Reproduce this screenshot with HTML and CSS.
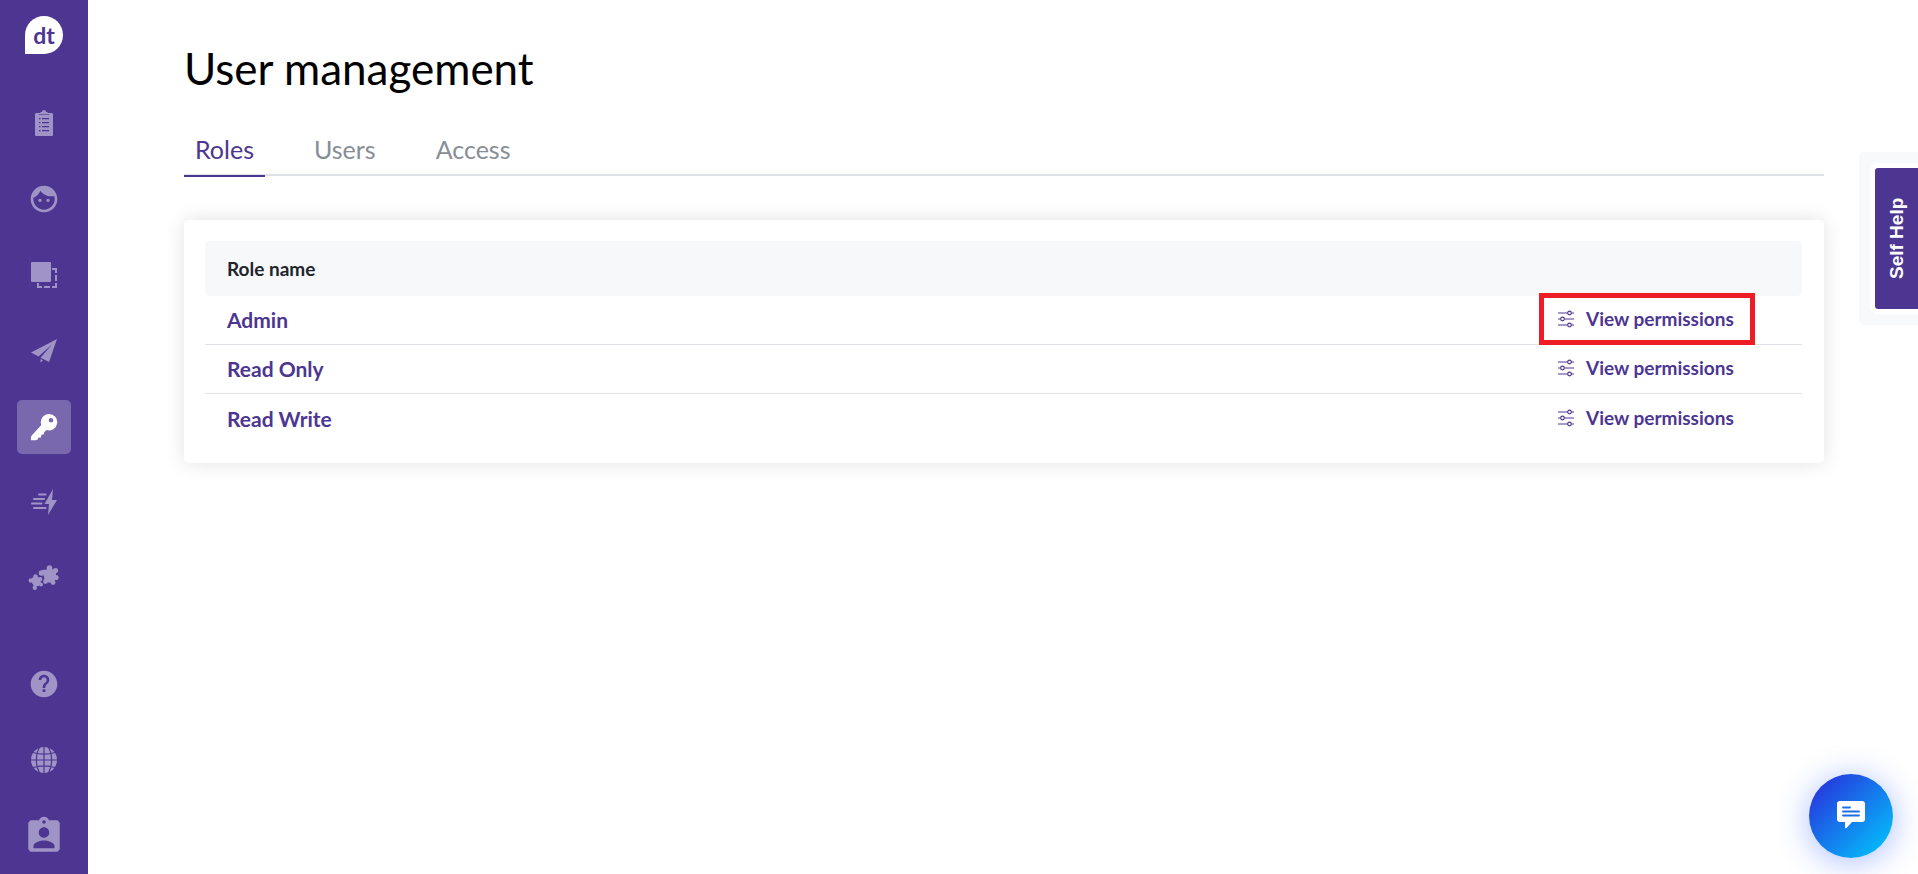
FILE: index.html
```html
<!DOCTYPE html>
<html lang="en">
<head>
<meta charset="UTF-8">
<meta name="viewport" content="width=device-width, initial-scale=1.0">
<title>User management</title>
<link rel="stylesheet" href="styles.css">
</head>
<body>
  <aside class="sidebar">
    <a href="#" class="logo" aria-label="Home"><span>dt</span></a>

    <nav class="side-nav">
      <a href="#" class="side-link" aria-label="Surveys">
        <svg width="26" height="26" viewBox="0 0 26 26" fill="currentColor">
          <path fill-rule="evenodd" d="M5.500 3H9c.3-.8 1-1 2-1 0-1.300.8-2 2-2s2 .7 2 2c1 0 1.700.2 2 1h3.500c1 0 1.500.5 1.500 1.500v20c0 1-.5 1.500-1.500 1.500h-15C4.500 26 4 25.500 4 24.500v-20C4 3.500 4.500 3 5.500 3zM8 8v1.300h1.500V8zm3 0v1.300h7V8zm-3 4v1.300h1.500V12zm3 0v1.300h7V12zm-3 4v1.300h1.500V16zm3 0v1.300h7V16zm-3 4v1.300h1.500V20zm3 0v1.300h7V20z"/>
          <path d="M8 4.500h10" stroke="#4c3692" stroke-width=".6"/>
        </svg>
      </a>
      <a href="#" class="side-link" aria-label="Contacts">
        <svg width="32" height="32" viewBox="0 0 24 24" fill="currentColor">
          <path d="M9 11.750c-.69 0-1.250.56-1.250 1.250s.56 1.250 1.250 1.250 1.250-.56 1.250-1.250-.56-1.250-1.250-1.250zm6 0c-.69 0-1.250.56-1.250 1.250s.56 1.250 1.250 1.250 1.250-.56 1.250-1.250-.56-1.250-1.250-1.250zM12 2C6.480 2 2 6.480 2 12s4.480 10 10 10 10-4.480 10-10S17.520 2 12 2zm0 18c-4.410 0-8-3.590-8-8 0-.29.02-.58.05-.86 2.360-1.050 4.230-2.980 5.210-5.370C11.070 8.330 14.050 10 17.420 10c.78 0 1.530-.09 2.250-.26.21.71.33 1.470.33 2.260 0 4.410-3.590 8-8 8z"/>
        </svg>
      </a>
      <a href="#" class="side-link" aria-label="Segments">
        <svg width="28" height="28" viewBox="0 0 28 28" fill="currentColor">
          <rect x="1" y="1" width="20" height="20" rx="1"/>
          <path d="M22 8h4v4M26 14v6M26 22v4h-4M20 26h-6M12 26H8v-4" fill="none" stroke="currentColor" stroke-width="2"/>
        </svg>
      </a>
      <a href="#" class="side-link" aria-label="Distribute">
        <svg width="28" height="28" viewBox="0 0 28 28" fill="currentColor">
          <path d="M27 2 1 15.500 8.500 19.500 22 7.500 10.500 20.700 19 25z"/>
          <path d="M10.500 22v3.500l2.500-2z"/>
        </svg>
      </a>
      <a href="#" class="side-link active" aria-label="User management">
        <svg width="28" height="28" viewBox="0 0 28 28" fill="currentColor">
          <path fill-rule="evenodd" d="M19 1a8.200 8.200 0 1 1-2.500 16l-2.300 2.200-.3 2-2.500.5-.5 2.700-2.700.3-.4 1.800c-2 .8-4.300 1-6.900.8-.1-1.800 0-3.400.6-4.600L11.300 12A8.200 8.200 0 0 1 19 1zm2 4a2.300 2.300 0 1 0 0 4.600A2.300 2.300 0 0 0 21 5z"/>
        </svg>
      </a>
      <a href="#" class="side-link" aria-label="Automations">
        <svg width="28" height="28" viewBox="0 0 28 28" fill="currentColor">
          <path d="M23 0 14.500 15H19l-1 11 9-15h-5z"/>
          <path d="M9 5.500h6.500M4 10h10M2 14.500h9.500M4 19h11.500" fill="none" stroke="currentColor" stroke-width="2" stroke-linecap="round"/>
        </svg>
      </a>
      <a href="#" class="side-link" aria-label="Integrations">
        <svg width="32" height="28" viewBox="0 0 32 28" fill="currentColor">
          <path d="M14 5 19 4.500 24 4 28 7 28 14 25 18 17 17 16 12z"/>
          <circle cx="13.500" cy="8" r="2.800"/>
          <circle cx="21.500" cy="3" r="2.800"/>
          <circle cx="27.500" cy="5.500" r="2.600"/>
          <circle cx="28" cy="12.500" r="2.600"/>
          <circle cx="25" cy="17.500" r="2.400"/>
          <circle cx="17.500" cy="16.500" r="2.400"/>
          <path d="M4 13 8 11 12 13 13 17 11 21 6 21 4 18z"/>
          <circle cx="2.800" cy="15.500" r="2.200"/>
          <circle cx="7.500" cy="11.500" r="2.200"/>
          <circle cx="12.500" cy="14" r="1.900"/>
          <circle cx="13" cy="19.500" r="2"/>
          <circle cx="6.800" cy="22.800" r="2.200"/>
        </svg>
      </a>
    </nav>

    <nav class="side-nav side-bottom">
      <a href="#" class="side-link" aria-label="Help">
        <svg width="32" height="32" viewBox="0 0 24 24" fill="currentColor">
          <path d="M12 2C6.480 2 2 6.480 2 12s4.480 10 10 10 10-4.480 10-10S17.520 2 12 2zm1 16h-2v-2h2v2zm2.070-6.750-.9.920C13.450 12.900 13 13.500 13 15h-2v-.5c0-1.100.45-2.100 1.170-2.830l1.240-1.260c.37-.36.59-.86.59-1.410 0-1.100-.9-2-2-2s-2 .9-2 2H8c0-2.210 1.790-4 4-4s4 1.790 4 4c0 .88-.36 1.680-.93 2.250z"/>
        </svg>
      </a>
      <a href="#" class="side-link" aria-label="Language">
        <svg width="28" height="28" viewBox="0 0 28 28">
          <circle cx="14" cy="14" r="13" fill="currentColor"/>
          <path d="M14 0v28M0 14h28M3 6.500c6 2.200 16 2.200 22 0M3 21.500c6-2.200 16-2.200 22 0M10.500 0C5 7.500 5 20.500 10.500 28M17.500 0c5.500 7.500 5.500 20.500 0 28" fill="none" stroke="#4c3692" stroke-width="1.200"/>
        </svg>
      </a>
      <a href="#" class="side-link" aria-label="Profile">
        <svg width="42" height="42" viewBox="0 0 24 24" fill="currentColor">
          <path d="M19 3h-4.180C14.400 1.840 13.300 1 12 1c-1.300 0-2.400.84-2.820 2H5c-1.100 0-2 .9-2 2v14c0 1.100.9 2 2 2h14c1.100 0 2-.9 2-2V5c0-1.100-.9-2-2-2zm-7 0c.55 0 1 .45 1 1s-.45 1-1 1-1-.45-1-1 .45-1 1-1zm0 4c1.660 0 3 1.340 3 3s-1.340 3-3 3-3-1.340-3-3 1.340-3 3-3zm6 12H6v-1.400c0-2 4-3.100 6-3.100s6 1.100 6 3.100V19z"/>
        </svg>
      </a>
    </nav>
  </aside>

  <main class="content">
    <h1>User management</h1>

    <nav class="tabs">
      <a href="#" class="tab active">Roles</a>
      <a href="#" class="tab">Users</a>
      <a href="#" class="tab">Access</a>
    </nav>

    <section class="card">
      <table class="roles">
        <thead>
          <tr>
            <th>Role name</th>
            <th class="action-col"></th>
          </tr>
        </thead>
        <tbody>
          <tr>
            <td><a href="#" class="role-link">Admin</a></td>
            <td class="action-col">
              <button type="button" class="permissions-btn highlight">
                <svg width="18" height="18" viewBox="0 0 18 18" fill="none" stroke="currentColor" stroke-width="1.200">
                  <path d="M1 3h9.500M14.500 3H17M1 9h2.500M7.500 9H17M1 15h9.500M14.500 15H17"/>
                  <circle cx="12.500" cy="3" r="1.800"/><circle cx="5.500" cy="9" r="1.800"/><circle cx="12.500" cy="15" r="1.800"/>
                </svg>
                View permissions
              </button>
            </td>
          </tr>
          <tr>
            <td><a href="#" class="role-link">Read Only</a></td>
            <td class="action-col">
              <button type="button" class="permissions-btn">
                <svg width="18" height="18" viewBox="0 0 18 18" fill="none" stroke="currentColor" stroke-width="1.200">
                  <path d="M1 3h9.500M14.500 3H17M1 9h2.500M7.500 9H17M1 15h9.500M14.500 15H17"/>
                  <circle cx="12.500" cy="3" r="1.800"/><circle cx="5.500" cy="9" r="1.800"/><circle cx="12.500" cy="15" r="1.800"/>
                </svg>
                View permissions
              </button>
            </td>
          </tr>
          <tr>
            <td><a href="#" class="role-link">Read Write</a></td>
            <td class="action-col">
              <button type="button" class="permissions-btn">
                <svg width="18" height="18" viewBox="0 0 18 18" fill="none" stroke="currentColor" stroke-width="1.200">
                  <path d="M1 3h9.500M14.500 3H17M1 9h2.500M7.500 9H17M1 15h9.500M14.500 15H17"/>
                  <circle cx="12.500" cy="3" r="1.800"/><circle cx="5.500" cy="9" r="1.800"/><circle cx="12.500" cy="15" r="1.800"/>
                </svg>
                View permissions
              </button>
            </td>
          </tr>
        </tbody>
      </table>
    </section>
  </main>

  <div class="self-help">
    <button type="button">Self Help</button>
  </div>

  <button type="button" class="chat-btn" aria-label="Open chat">
    <svg width="28" height="28" viewBox="0 0 28 28">
      <path d="M3 0h22a3 3 0 0 1 3 3v15a3 3 0 0 1-3 3H15l-5.500 6c-.8.6-1.500.3-1.500-.6V21H3a3 3 0 0 1-3-3V3a3 3 0 0 1 3-3z" fill="#fff"/>
      <path d="M6 6.500h7M6 10.500h16M6 14.500h16" stroke="#1a6fe8" stroke-width="1.800" stroke-linecap="round"/>
    </svg>
  </button>
</body>
</html>
```
FILE: styles.css
```css
:root {
  --primary-color: #4c3692;
  --icon-color: #a094c6;
  --muted-color: #868e96;
  --border-color: #dee2e6;
}

* {
  box-sizing: border-box;
}

body {
  margin: 0;
  min-height: 100vh;
  display: flex;
  background-color: #fff;
  font-family: Lato, "Open Sans", sans-serif;
}

a {
  text-decoration: none;
}

button {
  font-family: inherit;
  border: none;
  cursor: pointer;
}

/* sidebar */
.sidebar {
  flex: none;
  width: 88px;
  min-height: 100vh;
  padding: 16px 0 11px;
  display: flex;
  flex-direction: column;
  align-items: center;
  background-color: var(--primary-color);
}

.logo {
  width: 38px;
  height: 38px;
  display: flex;
  justify-content: center;
  align-items: center;
  border-radius: 50% 50% 50% 0;
  background-color: #fff;
  color: var(--primary-color);
  font-size: 23px;
  line-height: 38px;
  font-weight: bold;
}

.side-nav {
  margin-top: 42px;
  display: flex;
  flex-direction: column;
  gap: 22px;
}

.side-bottom {
  margin-top: auto;
}

.side-link {
  width: 54px;
  height: 54px;
  display: flex;
  justify-content: center;
  align-items: center;
  border-radius: 5px;
  color: var(--icon-color);
}

.side-link.active {
  background-color: #7968ad;
  color: #fff;
}

/* content */
.content {
  flex: 1;
  padding: 39px 94px 40px 96px;
}

h1 {
  margin: 0;
  font-size: 44px;
  line-height: 58px;
  font-weight: normal;
  color: #000;
}

.tabs {
  margin-top: 28px;
  display: flex;
  gap: 38px;
  border-bottom: 2px solid var(--border-color);
}

.tab {
  padding: 8px 11px 10px;
  margin-bottom: -3px;
  border-bottom: 2px solid transparent;
  font-size: 25px;
  line-height: 32px;
  color: var(--muted-color);
}

.tab.active {
  border-bottom-color: var(--primary-color);
  color: var(--primary-color);
}

.card {
  margin-top: 44px;
  padding: 21px 22px 20px 21px;
  border-radius: 5px;
  background-color: #fff;
  box-shadow: 0 0 20px rgba(0, 0, 0, 0.12);
}

.roles {
  width: 100%;
  border-collapse: separate;
  border-spacing: 0;
}

.roles th {
  height: 55px;
  padding: 0 22px;
  background-color: #f6f8fa;
  text-align: left;
  font-size: 19px;
  line-height: 24px;
  font-weight: bold;
  color: #212529;
}

.roles th:first-child {
  border-radius: 5px 0 0 5px;
}

.roles th:last-child {
  border-radius: 0 5px 5px 0;
}

.roles td {
  height: 49px;
  padding: 0 22px;
  border-bottom: 1px solid #e0e0e8;
}

.roles tr:last-child td {
  border-bottom: none;
}

.roles .action-col {
  width: 267px;
}

.roles td.action-col {
  padding-bottom: 2px;
}

.role-link {
  font-size: 21px;
  line-height: 28px;
  font-weight: bold;
  color: var(--primary-color);
}

.permissions-btn {
  position: relative;
  display: flex;
  align-items: center;
  gap: 11px;
  padding: 0;
  background: none;
  font-size: 19px;
  line-height: 28px;
  font-weight: bold;
  white-space: nowrap;
  color: var(--primary-color);
}

.permissions-btn.highlight::after {
  content: "";
  position: absolute;
  inset: -12px -21px -12px -18px;
  border: 5px solid #ee1c24;
}

/* floating widgets */
.self-help {
  position: fixed;
  top: 152px;
  right: 0;
  padding: 11px 0 11px 11px;
  border-radius: 5px 0 0 5px;
  background-color: #f8f9fb;
}

/* rotated 180deg, so the white border sits on the left once drawn */
.self-help button {
  display: block;
  width: 48px;
  height: 151px;
  padding: 0;
  border: 5px solid #fff;
  border-left: none;
  border-radius: 0 8px 8px 0;
  background-color: var(--primary-color);
  writing-mode: vertical-rl;
  transform: rotate(180deg);
  font-family: "Liberation Sans", Arial, sans-serif;
  font-size: 19px;
  font-weight: bold;
  color: #fff;
}

.chat-btn {
  position: fixed;
  right: 25px;
  bottom: 16px;
  width: 84px;
  height: 84px;
  padding: 0 0 2px;
  display: flex;
  justify-content: center;
  align-items: center;
  border-radius: 50%;
  background: linear-gradient(135deg, #2a27da, #00ccff);
  box-shadow: 0 4px 32px rgba(40, 90, 255, 0.4);
}
```
